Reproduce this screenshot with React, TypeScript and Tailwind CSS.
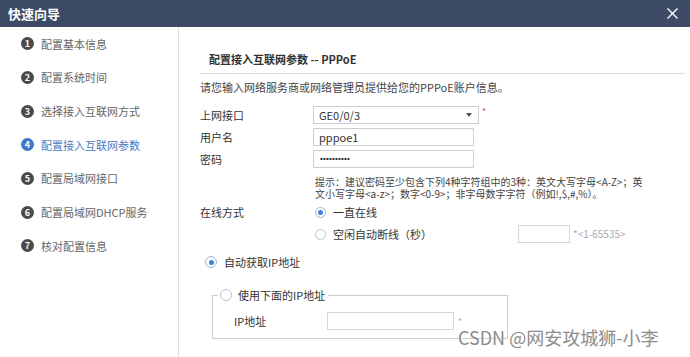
import React from 'react';

const steps = [
  '配置基本信息',
  '配置系统时间',
  '选择接入互联网方式',
  '配置接入互联网参数',
  '配置局域网接口',
  '配置局域网DHCP服务',
  '核对配置信息',
];

const Radio = ({ checked, size = 'sm' }: { checked?: boolean; size?: 'sm' | 'md' }) => (
  <span
    className={`${size === 'md' ? 'w-[12px] h-[12px]' : 'w-[11px] h-[11px]'} shrink-0 rounded-full border bg-white flex items-center justify-center ${
      checked ? 'border-[#9fb6d6]' : 'border-[#c4c4c4]'
    }`}
  >
    {checked && <span className="w-[5px] h-[5px] rounded-full bg-[#3d7fd6]" />}
  </span>
);

const App = () => {
  return (
    <div className="relative w-[690px] h-[357px] overflow-hidden bg-white font-['Noto_Sans_CJK_SC',sans-serif] text-[11px] text-[#333]">
      <div className="h-[27px] bg-[#3d4a66] flex items-center justify-between pl-[8px] pr-[12px]">
        <span className="text-[13px] font-bold text-white leading-none">快速向导</span>
        <svg width="11" height="11" viewBox="0 0 11 11">
          <path d="M0.5 0.5 L10.5 10.5 M10.5 0.5 L0.5 10.5" stroke="#fff" strokeWidth="1.4" fill="none" />
        </svg>
      </div>

      <div className="flex h-[330px]">
        <div className="w-[179px] shrink-0 border-r border-[#dedede]">
          {steps.map((s, i) => {
            const active = i === 3;
            return (
              <div key={s} className="h-[33.67px] flex items-center pl-[21px]">
                <span
                  className={`w-[13px] h-[13px] rounded-full flex items-center justify-center text-[9px] font-bold text-white leading-none ${
                    active ? 'bg-[#3b78c8]' : 'bg-[#4a4a4a]'
                  }`}
                >
                  {i + 1}
                </span>
                <span className={`ml-[7px] leading-[16px] ${active ? 'text-[#4a7bbf]' : 'text-[#666]'}`}>{s}</span>
              </div>
            );
          })}
        </div>

        <div className="flex-1 pl-[21px] pr-[5px] pt-[24px]">
          <div className="pl-[9px] pb-[6px] border-b border-[#dcdcdc] leading-[16px] font-bold text-[#333]">
            配置接入互联网参数 -- PPPoE
          </div>
          <div className="mt-[5px] leading-[16px] text-[#444]">请您输入网络服务商或网络管理员提供给您的PPPoE账户信息。</div>

          <div className="mt-[11px] flex flex-col gap-[4px]">
            <div className="flex items-center h-[18px]">
              <span className="w-[113px] leading-[16px]">上网接口</span>
              <div className="w-[166px] h-[18px] border border-[#cfcfcf] flex items-center justify-between pl-[5px] pr-[6px]">
                <span className="leading-none">GE0/0/3</span>
                <span className="w-0 h-0 border-l-[3.5px] border-r-[3.5px] border-t-[4px] border-l-transparent border-r-transparent border-t-[#555]" />
              </div>
              <span className="ml-[3px] text-[9px] text-[#d9534f] self-start leading-[12px]">*</span>
            </div>
            <div className="flex items-center h-[18px]">
              <span className="w-[113px] leading-[16px]">用户名</span>
              <div className="w-[161px] h-[18px] border border-[#cfcfcf] flex items-center pl-[5px]">
                <span className="leading-none">pppoe1</span>
              </div>
            </div>
            <div className="flex items-center h-[18px]">
              <span className="w-[113px] leading-[16px]">密码</span>
              <div className="w-[161px] h-[18px] border border-[#cfcfcf] flex items-center pl-[6px]">
                <span className="font-['Liberation_Sans',sans-serif] text-[8px] leading-none tracking-[0.2px] text-[#222]">••••••••••</span>
              </div>
            </div>
          </div>

          <div className="mt-[8px] ml-[115px] text-[10px] leading-[12px] text-[#444] whitespace-nowrap">
            提示：建议密码至少包含下列4种字符组中的3种：英文大写字母&lt;A-Z&gt;；英
            <br />
            文小写字母&lt;a-z&gt;；数字&lt;0-9&gt;；非字母数字字符（例如!,$,#,%）。
          </div>

          <div className="mt-[4px] flex items-center h-[16px]">
            <span className="w-[113px] leading-[16px]">在线方式</span>
            <span className="ml-[2px] flex items-center">
              <Radio checked />
            </span>
            <span className="ml-[7px] leading-[16px]">一直在线</span>
          </div>
          <div className="mt-[5px] flex items-center h-[18px] pl-[113px]">
            <span className="ml-[2px] flex items-center">
              <Radio />
            </span>
            <span className="ml-[7px] w-[185px] leading-[16px]">空闲自动断线（秒）</span>
            <span className="w-[52px] h-[18px] border border-[#d6d6d6]" />
            <span className="ml-[3px] text-[10px] text-[#aaa] leading-none">*&lt;1-65535&gt;</span>
          </div>

          <div className="mt-[11px] flex items-center h-[16px] pl-[5px]">
            <Radio checked size="md" />
            <span className="ml-[7px] leading-[16px]">自动获取IP地址</span>
          </div>

          <fieldset className="mt-[17px] ml-[12px] w-[296px] border border-[#cccccc] pb-[8px]">
            <legend className="ml-[5px] px-[2px] flex items-center h-[16px]">
              <Radio size="md" />
              <span className="ml-[6px] pr-[1px] leading-[16px]">使用下面的IP地址</span>
            </legend>
            <div className="mt-[9px] pl-[21px] flex items-center h-[18px]">
              <span className="w-[93px] leading-[16px]">IP地址</span>
              <span className="w-[127px] h-[18px] border border-[#d6d6d6]" />
              <span className="ml-[4px] text-[9px] text-[#aaa] leading-none">*</span>
            </div>
          </fieldset>
        </div>
      </div>

      <div className="absolute left-[458px] top-[326px] text-[18px] leading-[22px] text-[#8c8c8c] whitespace-nowrap [text-shadow:0_0_2px_#fff]">
        CSDN @网安攻城狮-小李
      </div>
    </div>
  );
};

export default App;
